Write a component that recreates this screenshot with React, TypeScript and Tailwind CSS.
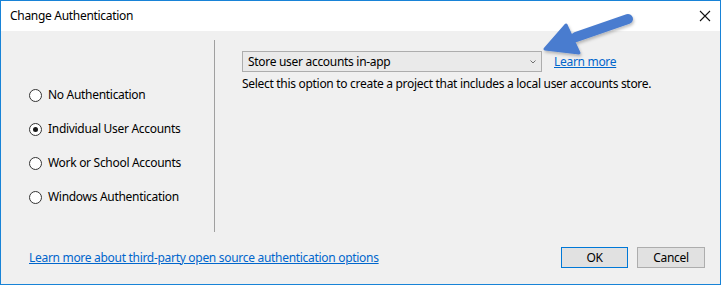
import * as React from "react"

const OPTIONS = [
  { id: "none", label: "No Authentication" },
  { id: "individual", label: "Individual User Accounts" },
  { id: "work", label: "Work or School Accounts" },
  { id: "windows", label: "Windows Authentication" },
]

function Radio({ checked }: { checked: boolean }) {
  return (
    <span className="w-[13px] h-[13px] rounded-full border border-[#333333] bg-white flex items-center justify-center shrink-0">
      {checked && <span className="w-[5px] h-[5px] rounded-full bg-[#1a1a1a]" />}
    </span>
  )
}

function Arrow() {
  return (
    <svg className="absolute left-[530px] top-[6px] pointer-events-none" width="110" height="56" viewBox="0 0 110 56">
      <defs>
        <filter id="sh" x="-20%" y="-20%" width="140%" height="160%">
          <feDropShadow dx="1" dy="2" stdDeviation="1.5" floodColor="#000" floodOpacity="0.25" />
        </filter>
      </defs>
      <g filter="url(#sh)" fill="#4a7ccf" stroke="#4a7ccf" strokeLinejoin="round" strokeLinecap="round">
        <line x1="97" y1="12" x2="45" y2="30" strokeWidth="10" />
        <polygon points="14,42 35,18 48,46" strokeWidth="3" />
      </g>
    </svg>
  )
}

export default function App() {
  const [selected, setSelected] = React.useState("individual")

  return (
    <div className="relative w-[721px] h-[285px] border border-[#1883d7] bg-[#f0f0f0] flex flex-col text-[12px] tracking-[-0.3px] text-black font-['Noto_Sans',sans-serif]">
      {/* Title bar */}
      <div className="h-[30px] bg-white flex items-center justify-between pl-[9px] pr-[8px]">
        <span className="text-[12px]">Change Authentication</span>
        <svg width="12" height="12" viewBox="0 0 12 12" className="mr-[1px]">
          <path d="M1 1 L11 11 M11 1 L1 11" stroke="#111" strokeWidth="1.1" />
        </svg>
      </div>

      {/* Body */}
      <div className="flex-1 flex flex-col">
        <div className="flex pt-[9px]">
          <div className="w-[213px] pt-[38px] flex flex-col">
            {OPTIONS.map((o) => (
              <label
                key={o.id}
                className="h-[34px] flex items-center gap-[6px] pl-[28px] cursor-default"
                onClick={() => setSelected(o.id)}
              >
                <Radio checked={selected === o.id} />
                <span>{o.label}</span>
              </label>
            ))}
          </div>
          <div className="w-px h-[192px] bg-[#a0a0a0]" />
          <div className="flex-1 pl-[27px] pt-[11px]">
            <div className="flex items-center gap-[12px]">
              <div className="w-[300px] h-[21px] border border-[#adadad] bg-[#eaeaea] flex items-center justify-between pl-[5px] pr-[5px]">
                <span>Store user accounts in-app</span>
                <svg width="6" height="4" viewBox="0 0 6 4">
                  <path d="M0.5 0.5 L3 3 L5.5 0.5" stroke="#707070" strokeWidth="1" fill="none" />
                </svg>
              </div>
              <a className="text-[#0066cc] underline">Learn more</a>
            </div>
            <p className="mt-[3px]">Select this option to create a project that includes a local user accounts store.</p>
          </div>
        </div>

        <div className="flex items-center justify-between pl-[28px] pr-[15px] mt-[15px]">
          <a className="text-[#0066cc] underline">Learn more about third-party open source authentication options</a>
          <div className="flex gap-[9px]">
            <button className="w-[67px] h-[21px] border border-[#0078d7] bg-[#e1e1e1]">OK</button>
            <button className="w-[68px] h-[21px] border border-[#adadad] bg-[#e1e1e1]">Cancel</button>
          </div>
        </div>
      </div>

      <Arrow />
    </div>
  )
}
